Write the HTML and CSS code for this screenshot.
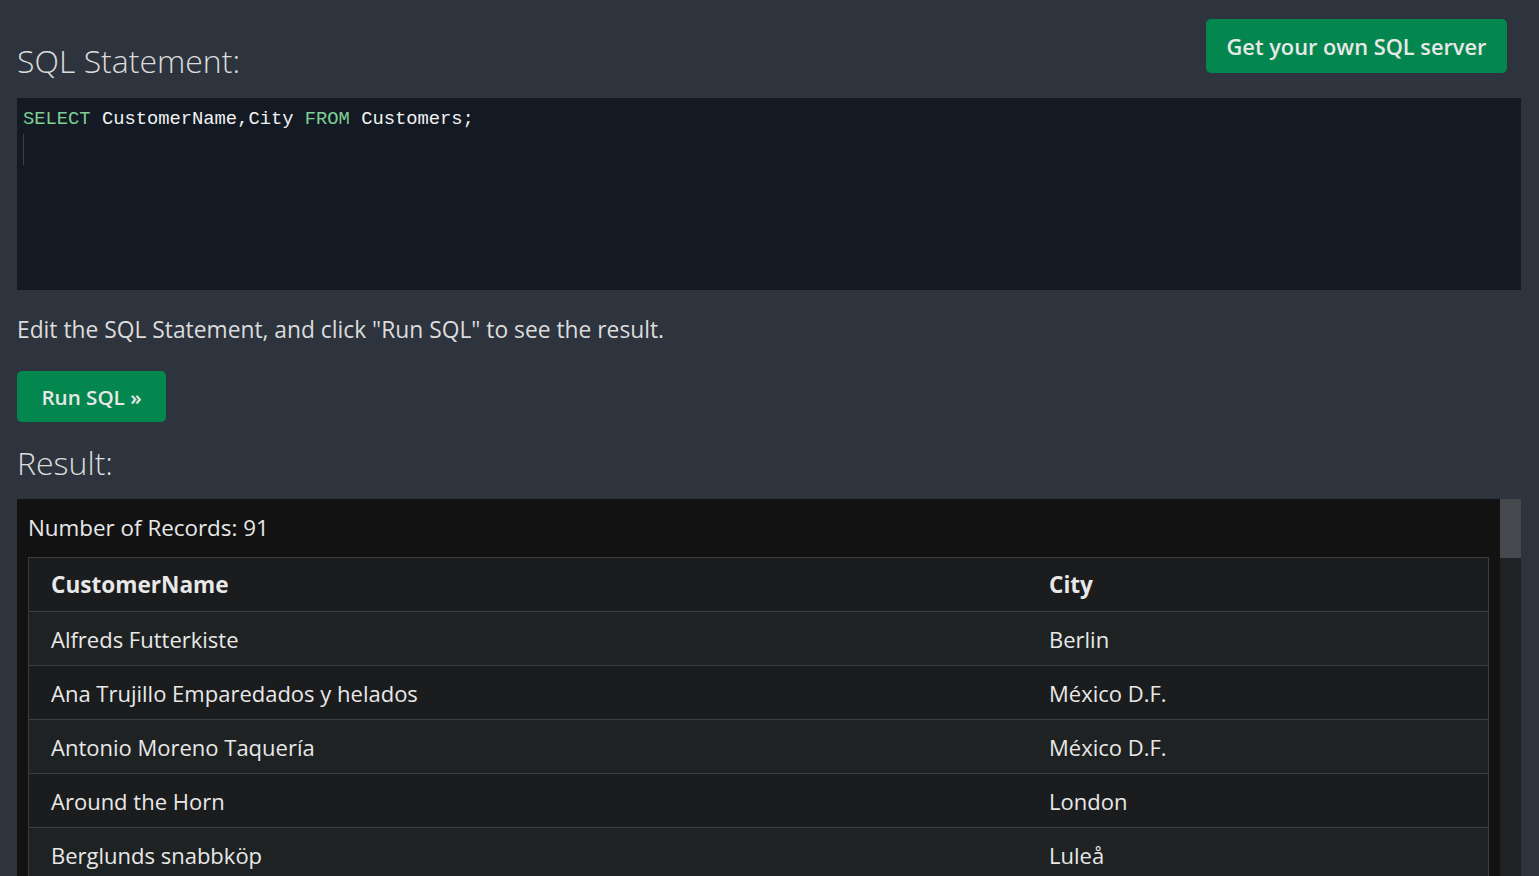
FILE: index.html
```html
<!DOCTYPE html>
<html lang="en">
<head>
<meta charset="utf-8">
<title>SQL Tryit</title>
<link rel="stylesheet" href="styles.css">
</head>
<body>
<div class="page">
  <div class="top">
    <h2 class="heading heading-sql">SQL Statement:</h2>
    <a class="btn btn-server" href="#">Get your own SQL server</a>
  </div>
  <div class="editor">
    <div class="code-line"><span class="kw">SELECT</span> CustomerName,City <span class="kw">FROM</span> Customers;</div>
    <div class="code-line"><span class="cursor"></span></div>
  </div>
  <p class="hint">Edit the SQL Statement, and click "Run SQL" to see the result.</p>
  <a class="btn btn-run" href="#">Run SQL »</a>
  <h2 class="heading heading-result">Result:</h2>
  <div class="result">
    <div class="result-inner">
      <div class="count">Number of Records: 91</div>
      <table class="grid">
        <tr><th class="col-name">CustomerName</th><th>City</th></tr>
        <tr><td>Alfreds Futterkiste</td><td>Berlin</td></tr>
        <tr><td>Ana Trujillo Emparedados y helados</td><td>México D.F.</td></tr>
        <tr><td>Antonio Moreno Taquería</td><td>México D.F.</td></tr>
        <tr><td>Around the Horn</td><td>London</td></tr>
        <tr><td>Berglunds snabbköp</td><td>Luleå</td></tr>
      </table>
    </div>
    <div class="scrollbar"><div class="thumb"></div></div>
  </div>
</div>
</body>
</html>
```
FILE: styles.css
```css
html, body {
  margin: 0;
  padding: 0;
  height: 100%;
  overflow: hidden;
}
body {
  background: #2e343e;
  color: #dddddd;
  font-family: "Open Sans", "Noto Sans", sans-serif;
}
.page {
  padding: 0 18px 0 17px;
}
.top {
  display: flex;
  justify-content: space-between;
  align-items: flex-start;
  height: 98px;
}
.heading {
  margin: 0;
  font-weight: 300;
  font-size: 32px;
  color: #dcdcdc;
}
.heading-sql {
  padding-top: 41px;
  line-height: 40px;
}
.btn {
  display: inline-flex;
  align-items: center;
  justify-content: center;
  background: #04874f;
  color: #e8e8e8;
  text-decoration: none;
  font-weight: 600;
  border-radius: 5px;
}
.btn-server {
  margin-top: 19px;
  width: 301px;
  height: 54px;
  font-size: 21.8px;
  margin-right: 14px;
}
.editor {
  background: #131a24;
  height: 192px;
  padding: 6px 6px 0 6px;
  box-sizing: border-box;
  font-family: "Liberation Mono", "DejaVu Sans Mono", monospace;
  font-size: 18.8px;
  color: #f2f2f2;
}
.code-line {
  height: 30px;
  line-height: 30px;
  white-space: pre;
}
.kw {
  color: #7fcf96;
}
.cursor {
  display: block;
  width: 1px;
  height: 31px;
  background: #3a4048;
}
.hint {
  margin: 0;
  padding-top: 25px;
  height: 56px;
  font-size: 22.8px;
  line-height: 30px;
  color: #dcdcdc;
}
.btn-run {
  width: 149px;
  height: 51px;
  font-size: 20.6px;
}
.heading-result {
  line-height: 40px;
  padding: 21px 0 16px;
}
.result {
  display: flex;
  background: #121212;
  height: 400px;
}
.result-inner {
  flex: 1;
  padding: 12px 11px 0 11px;
}
.count {
  font-size: 22.4px;
  line-height: 34px;
  padding-bottom: 12px;
  color: #e8e8e8;
}
.grid {
  width: 100%;
  border-collapse: collapse;
  border: 1px solid #3b3e40;
  font-size: 22px;
  color: #e8e8e8;
}
.grid th, .grid td {
  text-align: left;
  height: 53px;
  padding: 0 22px;
  border-bottom: 1px solid #3b3e40;
}
.grid th {
  font-weight: 700;
  font-size: 22.6px;
}
.col-name {
  width: 954px;
}
.grid tr {
  background: #1b1c1e;
}
.grid tr:nth-child(even) {
  background: #1f2223;
}
.scrollbar {
  width: 21px;
  background: #1f2224;
}
.thumb {
  height: 59px;
  background: #45494e;
}
```
